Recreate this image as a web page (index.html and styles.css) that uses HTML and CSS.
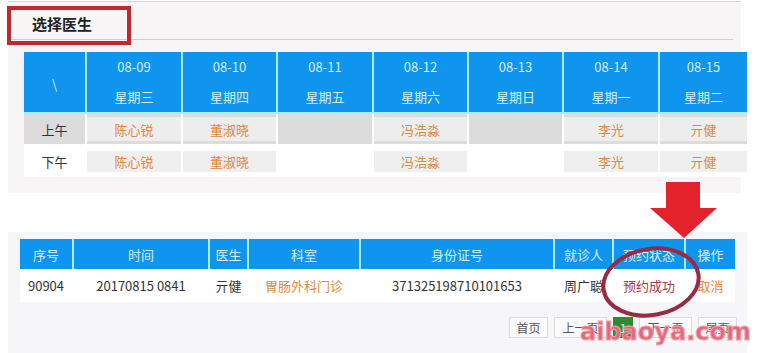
FILE: index.html
```html
<!DOCTYPE html>
<html lang="zh-CN">
<head>
<meta charset="utf-8">
<title>选择医生</title>
<link rel="stylesheet" href="styles.css">
</head>
<body>
<section class="panel sched-panel">
  <div class="panel-title">选择医生</div>
  <div class="sched">
    <div class="srow shead">
      <div class="hc corner">\</div>
      <div class="hc"><span>08-09</span><span>星期三</span></div>
      <div class="hc"><span>08-10</span><span>星期四</span></div>
      <div class="hc"><span>08-11</span><span>星期五</span></div>
      <div class="hc"><span>08-12</span><span>星期六</span></div>
      <div class="hc"><span>08-13</span><span>星期日</span></div>
      <div class="hc"><span>08-14</span><span>星期一</span></div>
      <div class="hc"><span>08-15</span><span>星期二</span></div>
    </div>
    <div class="srow am">
      <div class="lab">上午</div>
      <div class="c"><span class="doc">陈心锐</span></div>
      <div class="c"><span class="doc">董淑晓</span></div>
      <div class="c"></div>
      <div class="c"><span class="doc">冯浩淼</span></div>
      <div class="c"></div>
      <div class="c"><span class="doc">李光</span></div>
      <div class="c"><span class="doc">亓健</span></div>
    </div>
    <div class="srow pm">
      <div class="lab">下午</div>
      <div class="c"><span class="doc">陈心锐</span></div>
      <div class="c"><span class="doc">董淑晓</span></div>
      <div class="c"></div>
      <div class="c"><span class="doc">冯浩淼</span></div>
      <div class="c"></div>
      <div class="c"><span class="doc">李光</span></div>
      <div class="c"><span class="doc">亓健</span></div>
    </div>
  </div>
</section>

<section class="panel list-panel">
  <div class="lgrid lhead">
    <div>序号</div>
    <div>时间</div>
    <div>医生</div>
    <div>科室</div>
    <div>身份证号</div>
    <div>就诊人</div>
    <div>预约状态</div>
    <div>操作</div>
  </div>
  <div class="lgrid lrow">
    <div>90904</div>
    <div>20170815 0841</div>
    <div>亓健</div>
    <div class="orange">胃肠外科门诊</div>
    <div>371325198710101653</div>
    <div>周广聪</div>
    <div class="ok">预约成功</div>
    <div class="orange">取消</div>
  </div>
  <div class="pager">
    <span class="pbtn w2">首页</span>
    <span class="pbtn w3">上一页</span>
    <span class="pbtn cur">1</span>
    <span class="pbtn w3">下一页</span>
    <span class="pbtn w2">尾页</span>
  </div>
</section>

<div class="note-box"></div>
<svg class="note-ellipse" width="112" height="84" viewBox="0 0 112 84">
  <ellipse cx="54" cy="40" rx="48" ry="33" transform="rotate(-10 54 40)" fill="none" stroke="#9a2944" stroke-width="4"/>
</svg>
<svg class="note-arrow" width="72" height="62" viewBox="0 0 72 62">
  <polygon points="18,2 52,2 52,28 69,28 36,58 2,28 18,28" fill="#e4222b"/>
</svg>
<div class="watermark">aibaoya.com</div>
</body>
</html>
```

FILE: styles.css
```css
body {
  margin: 0;
  width: 757px;
  height: 353px;
  overflow: hidden;
  position: relative;
  background: #fff;
  font-family: "Noto Sans CJK SC", "Noto Sans", sans-serif;
  font-size: 13px;
  color: #333;
}

.sched-panel {
  margin: 1px 0 0 8px;
  width: 733px;
  background: #f7f5f6;
  border-top: 1px solid #d6d6d6;
  padding-bottom: 16px;
}

.panel-title {
  box-sizing: border-box;
  height: 38px;
  padding: 5px 0 0 24px;
  margin-right: 8px;
  border-bottom: 1px solid #cfcfcf;
  display: flex;
  align-items: center;
  font-size: 15px;
  font-weight: bold;
  color: #222;
}

.sched {
  margin: 12px 0 0 16px;
  width: 723px;
  background: #fff;
  padding-bottom: 5px;
}

.srow {
  display: grid;
  grid-template-columns: 61px 94px 93px 94px 93px 93px 94px 87px;
  column-gap: 2px;
}

.shead {
  background: #a8eefa;
  padding-bottom: 2px;
}

.hc {
  height: 60px;
  background: #1095ee;
  color: #d6eefc;
  display: flex;
  flex-direction: column;
  align-items: center;
  justify-content: center;
  line-height: 30px;
}

.corner {
  padding-top: 4px;
  box-sizing: border-box;
}

.am {
  height: 30px;
}

.am .lab,
.am .c {
  background: #dcdcdc;
}

.lab {
  display: flex;
  align-items: center;
  justify-content: center;
  color: #333;
}

.doc {
  display: flex;
  align-items: center;
  justify-content: center;
  background: #eeeded;
  color: #e0883b;
}

.am .doc {
  height: 24px;
  margin-top: 3px;
}

.pm {
  margin-top: 7px;
  height: 21px;
}

.pm .doc {
  height: 21px;
  background: #efefef;
}

.list-panel {
  box-sizing: border-box;
  margin: 39px 0 0 8px;
  width: 739px;
  height: 130px;
  background: #f6f6f8;
  padding: 7px 0 0 12px;
}

.lgrid {
  display: grid;
  grid-template-columns: 52px 134px 37px 110px 192px 57px 70px 49px;
  column-gap: 2px;
  width: 715px;
}

.lgrid > div {
  display: flex;
  align-items: center;
  justify-content: center;
  white-space: nowrap;
}

.lhead {
  background: #a8eefa;
  height: 30px;
}

.lhead > div {
  background: #1095ee;
  color: #d6eefc;
}

.lrow {
  background: #fff;
  height: 33px;
}

.orange {
  color: #e0883b;
}

.ok {
  color: #9e3a4c;
}

.pager {
  display: flex;
  justify-content: flex-end;
  gap: 6px;
  margin-top: 15px;
  padding-right: 10px;
}

.pbtn {
  box-sizing: border-box;
  height: 21px;
  border: 1px solid #dcdcdc;
  background: #fbfbfb;
  color: #555;
  font-size: 12px;
  line-height: 19px;
  text-align: center;
}

.w2 { width: 39px; }
.w3 { width: 53px; }

.cur {
  width: 20px;
  background: #2e8b2e;
  border-color: #2e8b2e;
  color: #fff;
}

.note-box {
  position: absolute;
  left: 7px;
  top: 6px;
  width: 124px;
  height: 39px;
  box-sizing: border-box;
  border: 4px solid #c0282e;
}

.note-ellipse {
  position: absolute;
  left: 597px;
  top: 242px;
}

.note-arrow {
  position: absolute;
  left: 648px;
  top: 180px;
}

.watermark {
  position: absolute;
  left: 580px;
  top: 320px;
  font-family: "DejaVu Sans", sans-serif;
  font-weight: 700;
  font-size: 24px;
  line-height: 24px;
  color: #e8667c;
  -webkit-text-stroke: 1px #f2a3b0;
}
```
